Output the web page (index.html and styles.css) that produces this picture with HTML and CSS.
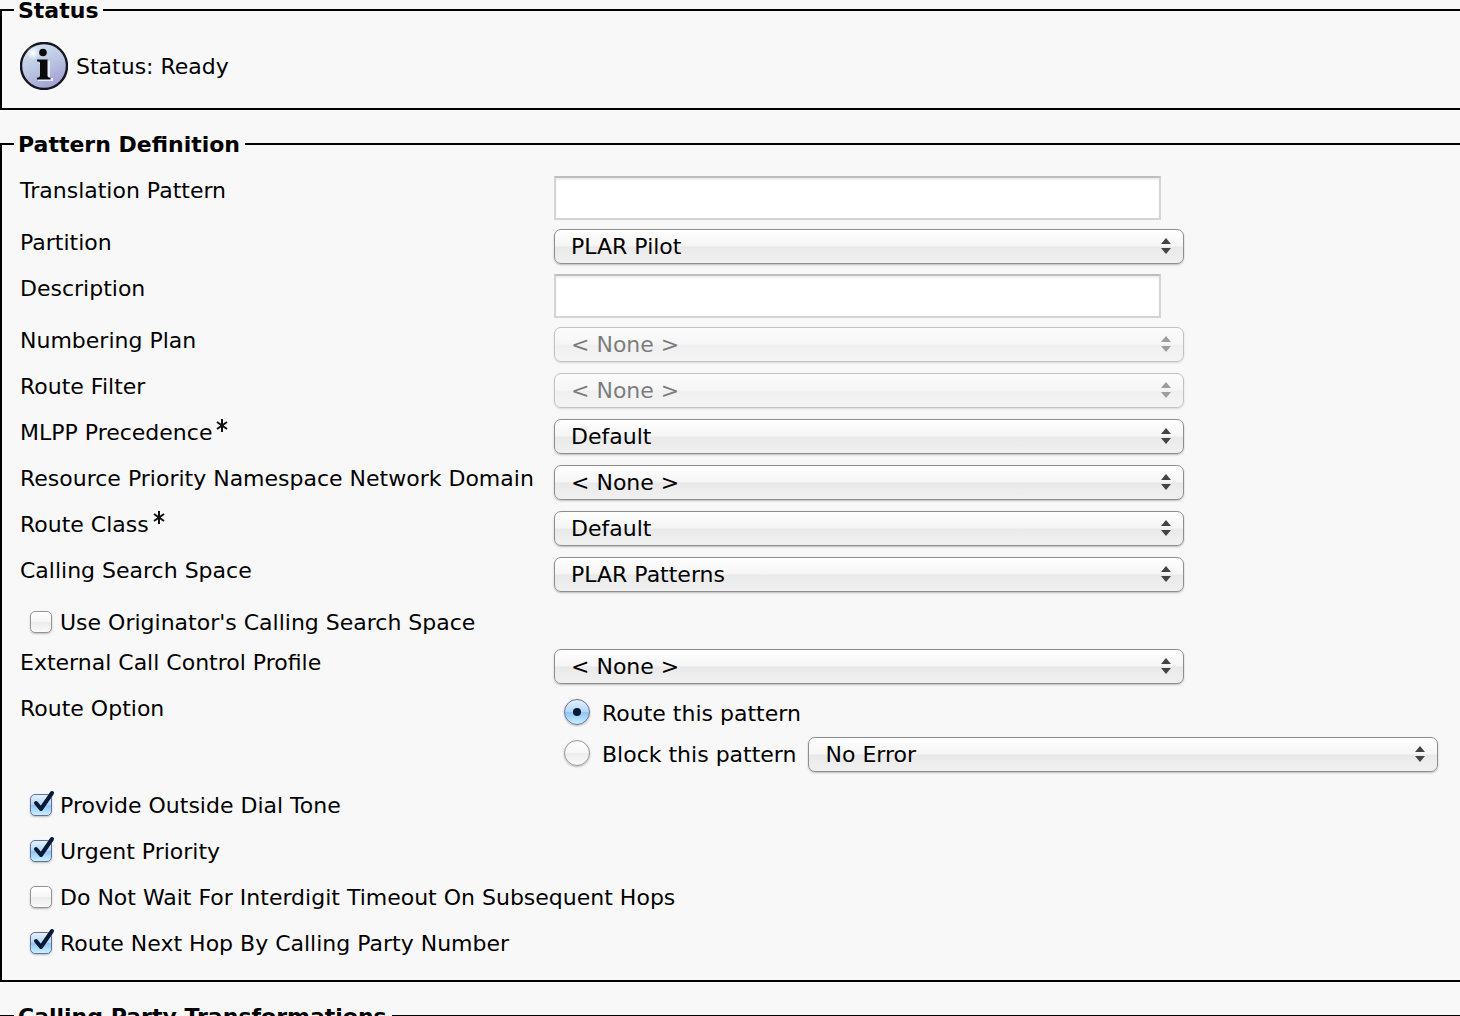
FILE: index.html
```html
<!DOCTYPE html>
<html lang="en">
<head>
    <meta charset="UTF-8">
    <title>Translation Pattern Configuration</title>
    <link rel="stylesheet" href="styles.css">
</head>
<body>
    <form>
        <fieldset class="panel">
            <legend>Status</legend>
            <div class="status">
                <svg class="status-icon" viewBox="0 0 48 48" aria-hidden="true">
                    <defs>
                        <linearGradient id="ball" x1="0.2" y1="0" x2="0.7" y2="1">
                            <stop offset="0" stop-color="#d3e6f2"/>
                            <stop offset="0.5" stop-color="#bcc6e4"/>
                            <stop offset="1" stop-color="#a09cd2"/>
                        </linearGradient>
                        <radialGradient id="shine">
                            <stop offset="0" stop-color="#fff"/>
                            <stop offset="1" stop-color="#fff" stop-opacity="0"/>
                        </radialGradient>
                    </defs>
                    <circle cx="24" cy="24" r="23" fill="url(#ball)" stroke="#15171f" stroke-width="2.4"/>
                    <circle cx="13" cy="11" r="7" fill="url(#shine)"/>
                    <path d="M19 19h11v17h3v3H18v-3h4V22h-3z" fill="#e6ebf8"/>
                    <circle cx="23" cy="10.5" r="3.8" fill="#0a0a0c"/>
                    <path d="M17 17.500h10.500v16.500q0 1.500 3 1.800v1.700H17v-1.700q3-.3 3-1.800V21q0-1.500-3-1.800z" fill="#0a0a0c"/>
                </svg>
                <span>Status: Ready</span>
            </div>
        </fieldset>

        <fieldset class="panel">
            <legend>Pattern Definition</legend>

            <div class="row">
                <label for="pattern">Translation Pattern</label>
                <input type="text" id="pattern" name="pattern">
            </div>
            <div class="row">
                <label for="partition">Partition</label>
                <select id="partition" name="partition">
                    <option>PLAR Pilot</option>
                </select>
            </div>
            <div class="row">
                <label for="description">Description</label>
                <input type="text" id="description" name="description">
            </div>
            <div class="row">
                <label for="plan">Numbering Plan</label>
                <select id="plan" name="plan" disabled>
                    <option>&lt; None &gt;</option>
                </select>
            </div>
            <div class="row">
                <label for="filter">Route Filter</label>
                <select id="filter" name="filter" disabled>
                    <option>&lt; None &gt;</option>
                </select>
            </div>
            <div class="row">
                <label for="mlpp">MLPP Precedence<svg class="required" viewBox="0 0 12 14" aria-hidden="true"><path d="M6 0v13M1 3l10 7M11 3L1 10M4 6.500h4"/></svg></label>
                <select id="mlpp" name="mlpp">
                    <option>Default</option>
                </select>
            </div>
            <div class="row">
                <label for="domain">Resource Priority Namespace Network Domain</label>
                <select id="domain" name="domain">
                    <option>&lt; None &gt;</option>
                </select>
            </div>
            <div class="row">
                <label for="class">Route Class<svg class="required" viewBox="0 0 12 14" aria-hidden="true"><path d="M6 0v13M1 3l10 7M11 3L1 10M4 6.500h4"/></svg></label>
                <select id="class" name="class">
                    <option>Default</option>
                </select>
            </div>
            <div class="row">
                <label for="css">Calling Search Space</label>
                <select id="css" name="css">
                    <option>PLAR Patterns</option>
                </select>
            </div>
            <div class="check-row">
                <input type="checkbox" id="originator" name="originator">
                <label for="originator">Use Originator's Calling Search Space</label>
            </div>
            <div class="row">
                <label for="profile">External Call Control Profile</label>
                <select id="profile" name="profile">
                    <option>&lt; None &gt;</option>
                </select>
            </div>
            <div class="row" role="radiogroup" aria-labelledby="option-label">
                <span class="row-label" id="option-label">Route Option</span>
                <div class="options">
                    <div class="option">
                        <input type="radio" id="route" name="option" checked>
                        <label for="route">Route this pattern</label>
                    </div>
                    <div class="option">
                        <input type="radio" id="block" name="option">
                        <label for="block">Block this pattern</label>
                        <select name="reason" aria-label="Block reason">
                            <option>No Error</option>
                        </select>
                    </div>
                </div>
            </div>
            <div class="check-row">
                <input type="checkbox" id="tone" name="tone" checked>
                <label for="tone">Provide Outside Dial Tone</label>
            </div>
            <div class="check-row">
                <input type="checkbox" id="urgent" name="urgent" checked>
                <label for="urgent">Urgent Priority</label>
            </div>
            <div class="check-row">
                <input type="checkbox" id="timeout" name="timeout">
                <label for="timeout">Do Not Wait For Interdigit Timeout On Subsequent Hops</label>
            </div>
            <div class="check-row">
                <input type="checkbox" id="nexthop" name="nexthop" checked>
                <label for="nexthop">Route Next Hop By Calling Party Number</label>
            </div>
        </fieldset>

        <fieldset class="panel">
            <legend>Calling Party Transformations</legend>
        </fieldset>
    </form>
</body>
</html>
```
FILE: styles.css
```css
* {
    box-sizing: border-box;
}

body {
    margin: 0;
    height: 100vh;
    overflow: hidden;
    background-color: #f8f8f8;
    color: #000;
    font-family: Verdana, "DejaVu Sans", sans-serif;
    font-size: 22px;
    line-height: 28px;
}

/* Panels run off the right edge, so only three sides have a border */
.panel {
    margin: 0 0 24px;
    padding: 17px 0 16px 18px;
    border: 2px solid #000;
    border-right: none;
}

.panel legend {
    margin-left: -6px;
    padding: 2px 5px 0 4px;
    font-weight: bold;
    line-height: 18px;
}

.status {
    display: flex;
    align-items: center;
    gap: 8px;
    padding: 5px 0 2px;
}

.status-icon {
    width: 48px;
    height: 48px;
}

.status span,
.check-row label {
    padding-top: 2px;
}

/* Label on the left, field on the right */
.row {
    display: grid;
    grid-template-columns: 534px 1fr;
    align-items: start;
}

.row > label,
.row-label {
    padding-top: 6px;
    white-space: nowrap;
}

.required {
    width: 12px;
    height: 14px;
    margin-left: 4px;
    vertical-align: 7px;
    fill: none;
    stroke: #111;
    stroke-width: 2;
}

input[type="text"] {
    width: 607px;
    height: 44px;
    margin: 5px 0 3px;
    padding: 0 8px;
    border: 2px solid #d4d4d4;
    border-top-color: #bebebe;
    background-color: #fff;
    box-shadow: inset 0 2px 2px #eee;
    font: inherit;
}

select {
    appearance: none;
    width: 630px;
    height: 35px;
    margin: 6px 0 5px;
    padding: 0 40px 0 16px;
    border: 1px solid #8e8e8e;
    border-radius: 7px;
    background: url("data:image/svg+xml,%3Csvg xmlns='http://www.w3.org/2000/svg' width='10' height='16'%3E%3Cpath d='M5 0l5 6H0zM5 16l5-6H0z' fill='%23444'/%3E%3C/svg%3E") no-repeat right 12px top 8px,
        linear-gradient(#fff, #f5f5f5 49%, #e9e9e9 51%, #f1f1f1);
    box-shadow: 0 1px 2px #bbb;
    color: #000;
    font: inherit;
}

select:disabled {
    opacity: 0.5;
}

.check-row {
    display: flex;
    align-items: center;
    gap: 8px;
    height: 46px;
    padding: 4px 0 0 10px;
}

input[type="checkbox"],
input[type="radio"] {
    appearance: none;
    position: relative;
    flex: none;
    margin: 0;
    border: 1px solid #949494;
    background: linear-gradient(#fff, #f6f6f6 49%, #ececec 51%, #fafafa);
    box-shadow: 0 1px 2px #bbb;
}

input[type="checkbox"] {
    width: 22px;
    height: 22px;
    border-radius: 5px;
}

input[type="radio"] {
    width: 26px;
    height: 26px;
    margin-bottom: 3px;
    border-radius: 50%;
}

input[type="checkbox"]:checked,
input[type="radio"]:checked {
    border-color: #66709a;
    background: linear-gradient(#e4f1fc, #b4d7f7 49%, #8ec4f4 51%, #c8f0ff);
}

/* Tick pokes out of the top right corner of the box */
input[type="checkbox"]:checked::after {
    content: "";
    position: absolute;
    left: 0;
    bottom: 0;
    width: 26px;
    height: 26px;
    background: url("data:image/svg+xml,%3Csvg xmlns='http://www.w3.org/2000/svg' width='26' height='26'%3E%3Cpath d='M5 14l5 6L21 4' fill='none' stroke='%23061935' stroke-width='4' stroke-linecap='round' stroke-linejoin='round'/%3E%3C/svg%3E") no-repeat;
}

input[type="radio"]:checked::after {
    content: "";
    position: absolute;
    inset: 8px;
    border-radius: 50%;
    background-color: #061935;
}

.options {
    padding: 4px 0 5px 10px;
}

.option {
    display: flex;
    align-items: center;
    gap: 12px;
    height: 41px;
}

.option select {
    margin: 0;
}
```
